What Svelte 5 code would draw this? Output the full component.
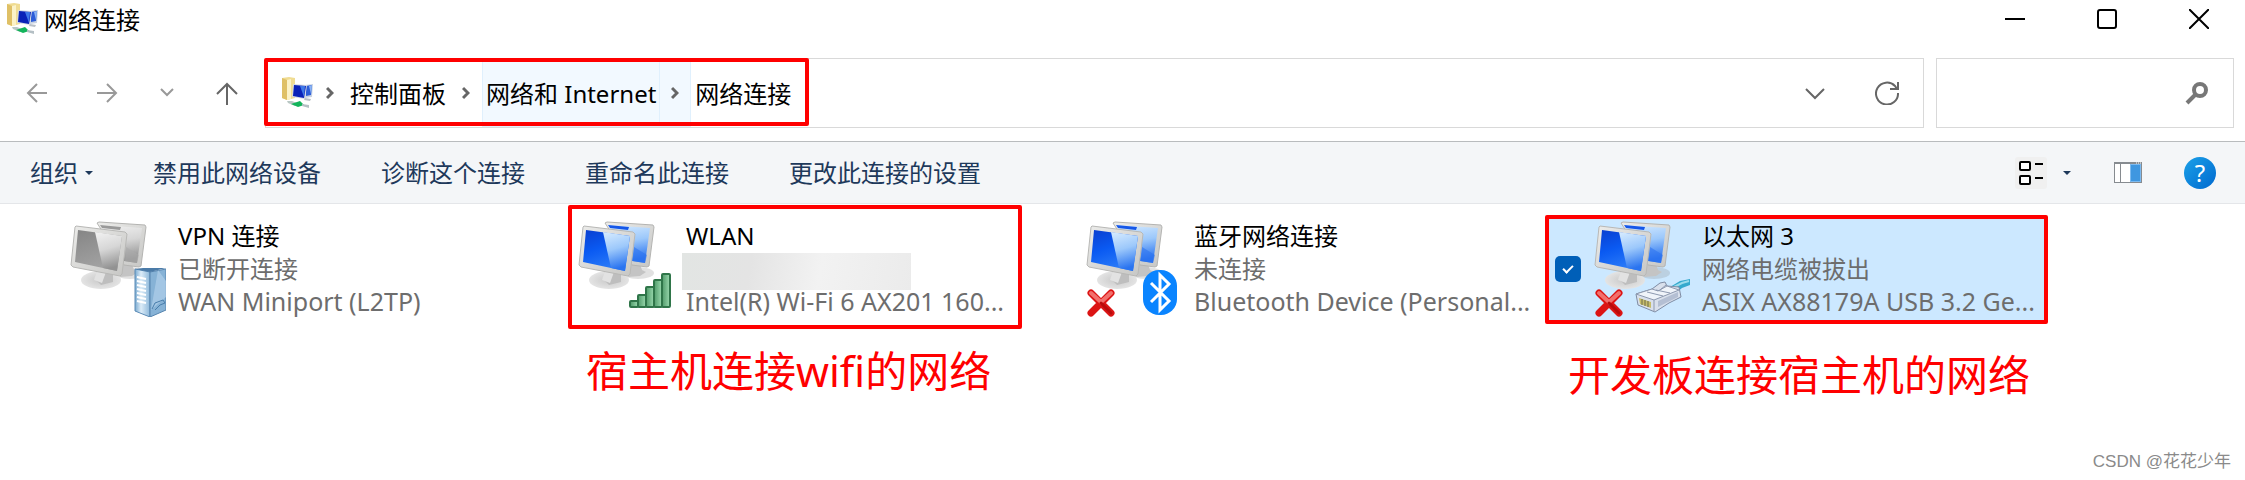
<script lang="ts">
	const commands = ['禁用此网络设备', '诊断这个连接', '重命名此连接', '更改此连接的设置'];

	const connections = [
		{ name: 'VPN 连接', status: '已断开连接', device: 'WAN Miniport (L2TP)', badge: 'server', off: true },
		{
			name: 'WLAN',
			status: '',
			device: 'Intel(R) Wi-Fi 6 AX201 160...',
			badge: 'signal',
			mark: 'wlan',
			note: '宿主机连接wifi的网络'
		},
		{
			name: '蓝牙网络连接',
			status: '未连接',
			device: 'Bluetooth Device (Personal...',
			badge: 'bluetooth',
			broken: true
		},
		{
			name: '以太网 3',
			status: '网络电缆被拔出',
			device: 'ASIX AX88179A USB 3.2 Ge...',
			badge: 'cable',
			broken: true,
			selected: true,
			mark: 'ethernet',
			note: '开发板连接宿主机的网络'
		}
	];

	const bars = [
		{ x: 52, y: 80 },
		{ x: 60, y: 74 },
		{ x: 68, y: 66 },
		{ x: 76, y: 59 },
		{ x: 84, y: 53 }
	];
</script>

{#snippet folderIcon()}
	<svg class="folder" viewBox="0 0 32 32" aria-hidden="true">
		<path d="M0 1 7 0l6 1v20l-8 2-5-2z" fill="#f0dc92" />
		<path d="M0 1 5 3v20l-5-2z" fill="#dfc066" />
		<path d="m5 3 4-1v20l-4 1z" fill="#fbf2c8" />
		<path d="m23 8 8-1-1 13-7 1z" fill="#c9d3e2" />
		<path d="m24 9 6-1-1 10-5 1z" fill="#2c5cd8" />
		<path d="m27 9 3-1-1 9z" fill="#8bb4f3" />
		<path d="m11 7 14 1-2 14-13-2z" fill="#d4dae3" />
		<path d="m12 8 12 1-2 12-11-2z" fill="#0a22b8" />
		<path d="m18 9 5 0-1 11z" fill="#3f78e8" />
		<path d="m23 21 6 1-1 2-6-1z" fill="#b9c0c7" />
		<path d="m5 24 5 0 5 2-2 3-7-3z" fill="#b9c7c4" />
		<path d="m9 27 9-3 4 4-6 2z" fill="#13b45b" />
		<path d="m20 27 7 1v3l-7-2z" fill="#b4bfc4" />
	</svg>
{/snippet}

{#snippet crumbArrow()}
	<svg class="crumb-arrow" viewBox="0 0 8 14" aria-hidden="true">
		<path d="m1 2 5 5-5 5" fill="none" stroke="#666" stroke-width="3" />
	</svg>
{/snippet}

<svg class="defs" aria-hidden="true">
	<defs>
		<linearGradient id="blue" x1="0" y1="0" x2="0.4" y2="1">
			<stop offset="0" stop-color="#0a3fd0" />
			<stop offset="0.5" stop-color="#0a5af2" />
			<stop offset="1" stop-color="#2b7bf8" />
		</linearGradient>
		<linearGradient id="blue-shine" x1="0" y1="0" x2="0.2" y2="1">
			<stop offset="0" stop-color="#d8ecff" />
			<stop offset="0.5" stop-color="#9cc8fb" />
			<stop offset="1" stop-color="#2a74f0" />
		</linearGradient>
		<linearGradient id="gray" x1="0" y1="0" x2="0.4" y2="1">
			<stop offset="0" stop-color="#858585" />
			<stop offset="1" stop-color="#a3a3a3" />
		</linearGradient>
		<linearGradient id="gray-shine" x1="0" y1="0" x2="0.2" y2="1">
			<stop offset="0" stop-color="#f2f2f2" />
			<stop offset="0.5" stop-color="#d6d6d6" />
			<stop offset="1" stop-color="#929292" />
		</linearGradient>
		<linearGradient id="frame" x1="0" y1="0" x2="1" y2="1">
			<stop offset="0" stop-color="#ececea" />
			<stop offset="1" stop-color="#c6c6c4" />
		</linearGradient>
		<radialGradient id="base">
			<stop offset="0" stop-color="#c8c8c8" />
			<stop offset="1" stop-color="#e4e4e4" />
		</radialGradient>
		<linearGradient id="server" x1="0" y1="0" x2="1" y2="0">
			<stop offset="0" stop-color="#7aaad0" />
			<stop offset="0.4" stop-color="#dcecf8" />
			<stop offset="1" stop-color="#8db8da" />
		</linearGradient>
		<linearGradient id="bar" x1="0" y1="0" x2="1" y2="0">
			<stop offset="0" stop-color="#4f9a69" />
			<stop offset="1" stop-color="#9ad9ae" />
		</linearGradient>
	</defs>
</svg>

<div class="window">
	<header class="title-bar">
		{@render folderIcon()}
		<h1>网络连接</h1>
		<div class="window-buttons">
			<button aria-label="最小化">
				<svg viewBox="0 0 20 20"><path d="M0 10h20" stroke="#000" stroke-width="2" /></svg>
			</button>
			<button aria-label="最大化">
				<svg viewBox="0 0 20 20">
					<rect x="1" y="1" width="18" height="18" rx="2" fill="none" stroke="#000" stroke-width="2" />
				</svg>
			</button>
			<button aria-label="关闭">
				<svg viewBox="0 0 20 20"><path d="m0 0 20 20M20 0 0 20" stroke="#000" stroke-width="2" /></svg>
			</button>
		</div>
	</header>

	<div class="address-row">
		<div class="nav-buttons">
			<button aria-label="后退">
				<svg viewBox="0 0 24 24"><path d="M22 12H3M12 3l-9 9 9 9" stroke="#999" stroke-width="2" fill="none" /></svg>
			</button>
			<button aria-label="前进">
				<svg viewBox="0 0 24 24"><path d="M2 12h19M12 3l9 9-9 9" stroke="#999" stroke-width="2" fill="none" /></svg>
			</button>
			<button class="recent" aria-label="最近浏览的位置">
				<svg viewBox="0 0 24 24"><path d="m6 8 6 6 6-6" stroke="#999" stroke-width="2" fill="none" /></svg>
			</button>
			<button aria-label="上移">
				<svg viewBox="0 0 24 24"><path d="M12 24V3M2 13 12 3l10 10" stroke="#666" stroke-width="2" fill="none" /></svg>
			</button>
		</div>

		<div class="address-box">
			<nav class="crumbs">
				{@render folderIcon()}
				<span class="crumb-sep">{@render crumbArrow()}</span>
				<button class="crumb">控制面板</button>
				<span class="crumb-sep">{@render crumbArrow()}</span>
				<button class="crumb hot">网络和 Internet</button>
				<span class="crumb-sep hot">{@render crumbArrow()}</span>
				<button class="crumb">网络连接</button>
			</nav>
			<div class="address-buttons">
				<button aria-label="展开">
					<svg viewBox="0 0 24 24"><path d="m3 8 9 9 9-9" stroke="#666" stroke-width="2" fill="none" /></svg>
				</button>
				<button aria-label="刷新">
					<svg viewBox="0 0 24 24">
						<path d="M23 12a11 11 0 1 1-3-7l2 3M23 1v7h-8" stroke="#666" stroke-width="2" fill="none" />
					</svg>
				</button>
			</div>
			<span class="mark address-mark"></span>
		</div>

		<label class="search">
			<input type="text" aria-label="搜索" />
			<svg viewBox="0 0 24 24" aria-hidden="true">
				<circle cx="15" cy="9" r="6" fill="none" stroke="#777" stroke-width="4" />
				<path d="m11 13-9 9" stroke="#777" stroke-width="4" />
			</svg>
		</label>
	</div>

	<div class="toolbar">
		<button class="command">
			组织
			<svg class="caret" viewBox="0 0 8 4" aria-hidden="true"><path d="M0 0h8L4 4z" fill="#1e395b" /></svg>
		</button>
		{#each commands as command}
			<button class="command">{command}</button>
		{/each}
		<div class="tools">
			<button class="view" aria-label="更改视图">
				<svg viewBox="0 0 32 32">
					<rect width="32" height="32" rx="3" fill="#f0f0f0" />
					<g fill="#fff" stroke="#000" stroke-width="2">
						<rect x="5" y="5" width="10" height="8" rx="1" />
						<rect x="5" y="19" width="10" height="8" rx="1" />
						<path d="M20 7h8M20 21h8" />
					</g>
				</svg>
			</button>
			<button class="view-more" aria-label="更多视图选项">
				<svg class="caret" viewBox="0 0 8 4"><path d="M0 0h8L4 4z" fill="#1e395b" /></svg>
			</button>
			<button class="pane" aria-label="显示预览窗格">
				<svg viewBox="0 0 28 21">
					<rect width="28" height="21" fill="#868b90" />
					<path d="M1 2h5v18H1zM7 2h9v18H7z" fill="#fff" />
					<path d="M16 2h11v18H16z" fill="#7cbaf0" />
					<path d="M17 3h9v16h-9z" fill="#3f97e0" />
					<path d="M22 1h1M24 1h1M26 1h1" stroke="#fff" />
				</svg>
			</button>
			<button class="help" aria-label="帮助">?</button>
		</div>
	</div>

	<main class="connections">
		{#each connections as item}
			<div class="connection" class:selected={item.selected}>
				{#if item.selected}
					<input class="tick" type="checkbox" checked aria-label={item.name} />
				{/if}
				<svg class="icon" viewBox="0 0 96 96" aria-hidden="true">
					<ellipse cx="60" cy="52" rx="16" ry="6" fill="#888" opacity="0.25" />
					<path d="m52 44 10-1 2 6 4 2-6 4-12 1z" fill="#c4c4c4" />
					<path d="m27 2 2-1 46 3 1 2-5 39-2 1-15-2z" fill="url(#frame)" stroke="#b4b4b2" />
					<path d="m30 4 42 3-5 35-13-2z" fill={item.off ? 'url(#gray-shine)' : 'url(#blue-shine)'} />
					<path d="m30 4 21 2-1 3-18-2z" fill={item.off ? '#999' : '#1557e8'} />
					<path d="m56 26 13 8-2 8-12-2z" fill={item.off ? '#aaa' : '#2d73f0'} opacity="0.6" />
					<ellipse cx="31" cy="59" rx="20" ry="9" fill="url(#base)" />
					<path d="m27 48 16 3 0 10-12 3-6-6z" fill="#bebebe" />
					<path d="m27 49 9 2-4 11-8-3z" fill="#e2e2e2" />
					<path d="m5 6 1-1 49 6 2 2-5 40-2 2L3 46l-2-2z" fill="url(#frame)" stroke="#b8b8b6" />
					<path d="m8 9 44 6-5 35L5 41z" fill={item.off ? 'url(#gray)' : 'url(#blue)'} />
					<path d="m25 11 27 4-5 35-14-3z" fill={item.off ? 'url(#gray-shine)' : 'url(#blue-shine)'} />

					{#if item.badge === 'server'}
						<path d="m65 48 15 3v45l-15-6z" fill="url(#server)" stroke="#5b8bb6" />
						<path d="m80 51 16-3v41l-16 7z" fill="#86b2d6" stroke="#5684ae" />
						<path d="m65 48 8-1h23l-16 4z" fill="#4b7ba8" />
						<path d="m88 49-7 40 15-13V60z" fill="#b7d4ec" opacity="0.6" />
						<path d="m67 56 9 2m-9 2 9 2m-9 2 9 2m-9 2 9 2m-9 2 9 2m-9 2 9 2m-9 2 9 2" stroke="#fff" stroke-width="2" />
						<path d="m82 88 3-6 8-3 2 3-5 2-5 5" fill="none" stroke="#487dab" />
					{:else if item.badge === 'signal'}
						{#each bars as bar}
							<rect x={bar.x} y={bar.y} width="8" height={86 - bar.y} rx="1" fill="url(#bar)" stroke="#2f7549" stroke-width="2" />
						{/each}
					{:else if item.badge === 'bluetooth'}
						<rect x="57" y="49" width="34" height="45" rx="16" fill="#0a84ff" />
						<path d="m65 62 18 18-9 9V54l9 9-18 18" fill="none" stroke="#fff" stroke-width="3" />
					{:else}
						<path d="m76 66 10-6 10-2v6l-8 3-6 5z" fill="#35a9cd" />
						<path d="m78 67 10-5 7-2" fill="none" stroke="#9bdcec" stroke-width="2" />
						<path d="m42 73 16-5 8-6 5-1 2 4 12 1 2 10-12 6-14 9-17-7z" fill="#d9e0ec" stroke="#7f8ca4" />
						<path d="m58 68-16 5 18 6 25-10-12-4-9 5z" fill="#f0f4fa" stroke="#8d99b0" />
						<path d="M60 79v11M53 71l16 4M62 69l14 3M72 64l-6 5" fill="none" stroke="#8d99b0" />
						<path d="m64 80 20-9v5l-20 10z" fill="#b4bfd3" />
						<path d="m45 77 12 4v6l-11-4z" fill="#c7bd6a" />
						<path d="m48 78v6m3-5v6m3-5v6" stroke="#6d6a48" />
					{/if}

					{#if item.broken}
						<path d="m5 72 20 20M25 72 5 92" stroke="#dc1414" stroke-width="7" stroke-linecap="round" />
						<path d="m5 72 10 9 10-9" fill="none" stroke="#f2706c" stroke-width="4" stroke-linecap="round" />
						<path d="m15 82 10 10" stroke="#b80c0c" stroke-width="3" stroke-linecap="round" />
					{/if}
				</svg>
				<div class="details">
					<p class="name">{item.name}</p>
					{#if item.status}
						<p>{item.status}</p>
					{:else}
						<p class="hidden-status"></p>
					{/if}
					<p class="device">{item.device}</p>
				</div>
				{#if item.mark}
					<span class="mark {item.mark}-mark"></span>
					<p class="note {item.mark}-note">{item.note}</p>
				{/if}
			</div>
		{/each}
	</main>

	<footer>CSDN @花花少年</footer>
</div>

<style>
	:global(body) {
		background: #fff;
	}

	.window {
		display: flex;
		flex-direction: column;
		min-height: 100vh;
		box-sizing: border-box;
		overflow: hidden;
		color: #000;
		font-family: 'Noto Sans', 'Noto Sans CJK SC', sans-serif;
		font-size: 24px;
		line-height: 33px;
	}

	.defs {
		position: absolute;
		width: 0;
		height: 0;
	}

	svg {
		display: block;
		flex-shrink: 0;
	}

	button {
		display: flex;
		align-items: center;
		justify-content: center;
		padding: 0;
		border: 0;
		background: none;
		color: inherit;
		font: inherit;
		white-space: nowrap;
	}

	h1,
	p {
		margin: 0;
		font-size: 24px;
		font-weight: 400;
	}

	.folder {
		width: 32px;
		height: 32px;
	}

	.title-bar {
		display: flex;
		align-items: center;
		height: 38px;
		padding-left: 7px;
	}

	.title-bar h1 {
		margin-left: 5px;
	}

	.window-buttons {
		display: flex;
		margin-left: auto;
	}

	.window-buttons button {
		width: 92px;
		height: 38px;
	}

	.window-buttons svg {
		width: 20px;
		height: 20px;
	}

	.address-row {
		display: flex;
		padding: 20px 11px 13px 0;
	}

	.nav-buttons {
		display: flex;
		align-items: center;
		width: 265px;
		padding-left: 2px;
		box-sizing: border-box;
	}

	.nav-buttons button {
		width: 70px;
	}

	.nav-buttons .recent {
		width: 50px;
	}

	.nav-buttons svg,
	.address-buttons svg {
		width: 24px;
		height: 24px;
	}

	.address-box {
		position: relative;
		display: flex;
		flex: 1;
		height: 68px;
		border: 1px solid #d9d9d9;
	}

	.crumbs {
		display: flex;
		align-items: center;
		padding-left: 16px;
	}

	.crumb,
	.crumb-sep {
		height: 68px;
		box-sizing: border-box;
		border: 1px solid transparent;
	}

	.crumb {
		padding: 0 3px;
	}

	.crumb-sep {
		display: flex;
		align-items: center;
		justify-content: center;
		width: 32px;
	}

	.hot {
		border-color: #e0f0fd;
		background: #f2f9ff;
	}

	.crumb-sep.hot {
		width: 31px;
		border-left: 0;
	}

	.crumb-arrow {
		width: 8px;
		height: 14px;
	}

	.address-buttons {
		display: flex;
		margin-left: auto;
	}

	.address-buttons button {
		width: 72px;
	}

	.search {
		display: flex;
		align-items: center;
		width: 298px;
		margin-left: 12px;
		padding-right: 24px;
		box-sizing: border-box;
		border: 1px solid #d9d9d9;
	}

	.search input {
		flex: 1;
		min-width: 0;
		border: 0;
		outline: 0;
		background: none;
		font: inherit;
	}

	.search svg {
		width: 24px;
		height: 24px;
	}

	.toolbar {
		display: flex;
		align-items: center;
		gap: 60px;
		height: 61px;
		padding: 0 29px 0 30px;
		border-top: 1px solid #b9bcbe;
		border-bottom: 1px solid #e4e6e9;
		background: #f4f6f8;
		color: #1e395b;
	}

	.command {
		gap: 7px;
	}

	.caret {
		width: 8px;
		height: 4px;
	}

	.tools {
		display: flex;
		align-items: center;
		margin-left: auto;
	}

	.view svg {
		width: 32px;
		height: 32px;
	}

	.view-more {
		width: 40px;
	}

	.pane {
		margin: 0 42px 0 27px;
	}

	.pane svg {
		width: 28px;
		height: 21px;
	}

	.help {
		width: 32px;
		height: 32px;
		border-radius: 50%;
		background: linear-gradient(135deg, #1ba1e8, #0069cf);
		color: #fff;
	}

	.connections {
		display: flex;
		flex-wrap: wrap;
		gap: 10px;
		padding: 15px 24px 0;
	}

	.connection {
		position: relative;
		display: flex;
		gap: 12px;
		width: 498px;
		padding: 0 0 3px 46px;
		box-sizing: border-box;
	}

	.selected {
		background: #cce8ff;
	}

	.icon {
		width: 96px;
		height: 96px;
		margin-top: 2px;
	}

	.tick {
		position: absolute;
		top: 37px;
		left: 7px;
		width: 26px;
		height: 26px;
		margin: 0;
		border-radius: 5px;
		background: #005fb8;
		appearance: none;
	}

	.tick::after {
		content: '';
		position: absolute;
		top: 7px;
		left: 10px;
		width: 4px;
		height: 8px;
		border: solid #fff;
		border-width: 0 2px 2px 0;
		transform: rotate(45deg);
	}

	.details {
		color: #6d6d6d;
		white-space: nowrap;
	}

	.name {
		color: #000;
	}

	.device {
		font-size: 25px;
	}

	.hidden-status {
		width: 229px;
		height: 37px;
		margin: 1px 0 -5px -4px;
		background: linear-gradient(100deg, #e2e5e3, #e4e4e4 30%, #f2f2f2 60%, #ebebeb);
	}

	/* Red frames drawn over the window */
	.mark {
		position: absolute;
		border: 4px solid #f00;
		border-radius: 2px;
		pointer-events: none;
	}

	.address-mark {
		top: -1px;
		left: -2px;
		width: 537px;
		height: 60px;
	}

	.wlan-mark {
		top: -14px;
		left: 36px;
		width: 446px;
		height: 116px;
	}

	.ethernet-mark {
		top: -4px;
		left: -3px;
		right: -2px;
		bottom: -3px;
	}

	.note {
		position: absolute;
		color: #f00;
		font-size: 42px;
		line-height: 50px;
		white-space: nowrap;
	}

	.wlan-note {
		top: 127px;
		left: 54px;
	}

	.ethernet-note {
		top: 131px;
		left: 20px;
	}

	footer {
		margin-top: auto;
		padding: 0 14px 6px;
		color: #8a8a8a;
		font-family: 'Liberation Sans', 'Noto Sans CJK SC', sans-serif;
		font-size: 17px;
		line-height: 24px;
		text-align: right;
	}
</style>
